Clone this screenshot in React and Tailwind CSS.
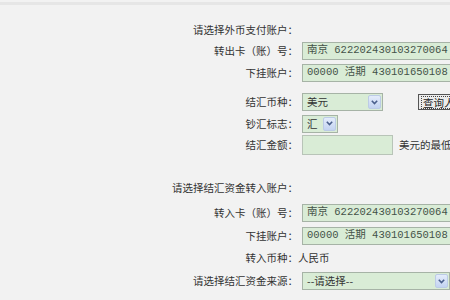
import React from 'react';

const cjk = { fontFamily: '"Noto Sans CJK SC", "Liberation Sans", sans-serif' };

function Arrow() {
  return (
    <span className="flex h-[14px] w-[13px] shrink-0 items-center justify-center rounded-[2px] border border-[#bccbe6] bg-gradient-to-b from-[#e4ecfb] to-[#c3d3f1]">
      <svg width="7" height="5" viewBox="0 0 7 5" fill="none">
        <path d="M0.8 0.8 L3.5 3.5 L6.2 0.8" stroke="#4a5f8c" strokeWidth="1.6" />
      </svg>
    </span>
  );
}

function Field({ children, className = '' }) {
  return (
    <div
      className={`flex h-full items-center whitespace-pre border border-[#a6b3a6] bg-[#d9ecd6] pl-[4px] text-[10.5px] text-[#445248] ${className}`}
      style={{ fontFamily: '"Liberation Mono", "Noto Sans CJK SC", monospace' }}
    >
      {children}
    </div>
  );
}

function Select({ children, className = '' }) {
  return (
    <div className={`flex h-full items-center justify-between border border-[#a6b3a6] bg-[#d9ecd6] pl-[4px] pr-[1px] text-[10.5px] text-[#333] ${className}`}>
      <span>{children}</span>
      <Arrow />
    </div>
  );
}

function Row({ label, className, children }) {
  return (
    <div className={`grid grid-cols-[298px_1fr] gap-x-[4px] ${className}`}>
      <div className="flex items-center justify-end text-[10.5px] text-[#333]">{label}</div>
      <div className="flex h-full min-w-0 items-center gap-[6px]">{children}</div>
    </div>
  );
}

export default function App() {
  return (
    <div className="h-[300px] w-[450px] overflow-hidden bg-[#f2f2f2]" style={cjk}>
      <div className="mt-[2px] h-[3px] bg-[#e6e6e6]" />
      <div className="flex flex-col pt-[17px]">
        <Row label="请选择外币支付账户：" className="h-[16px]" />
        <Row label="转出卡（账）号：" className="mt-[4px] h-[17px]">
          <Field className="w-[170px] shrink-0">南京 622202430103270064</Field>
        </Row>
        <Row label="下挂账户：" className="mt-[5px] h-[17px]">
          <Field className="w-[170px] shrink-0">00000 活期 430101650108</Field>
        </Row>
        <Row label="结汇币种：" className="mt-[12px] h-[18px]">
          <Select className="w-[81px] shrink-0">美元</Select>
          <button className="ml-[29px] flex h-[16px] shrink-0 items-center border border-[#555] bg-[#ececec] px-[2px] text-[10.5px] text-[#222]">
            <span className="whitespace-nowrap border border-dotted border-[#444] px-[1px] leading-[11px]">查询人民币</span>
          </button>
        </Row>
        <Row label="钞汇标志：" className="mt-[4px] h-[16px]">
          <Select className="w-[36px] shrink-0">汇</Select>
        </Row>
        <Row label="结汇金额：" className="mt-[4px] h-[20px]">
          <div className="h-full w-[91px] shrink-0 border border-[#b8c4b8] bg-[#d9ecd6]" />
          <span className="whitespace-nowrap text-[10.5px] text-[#333]">美元的最低金额</span>
        </Row>
        <Row label="请选择结汇资金转入账户：" className="mt-[25px] h-[16px]" />
        <Row label="转入卡（账）号：" className="mt-[8px] h-[17px]">
          <Field className="w-[170px] shrink-0">南京 622202430103270064</Field>
        </Row>
        <Row label="下挂账户：" className="mt-[6px] h-[17px]">
          <Field className="w-[170px] shrink-0">00000 活期 430101650108</Field>
        </Row>
        <Row label="转入币种：" className="mt-[6px] h-[16px]">
          <span className="-ml-[4px] text-[10.5px] text-[#333]">人民币</span>
        </Row>
        <Row label="请选择结汇资金来源：" className="mt-[6px] h-[18px]">
          <Select className="w-[148px] shrink-0">--请选择--</Select>
        </Row>
      </div>
    </div>
  );
}
